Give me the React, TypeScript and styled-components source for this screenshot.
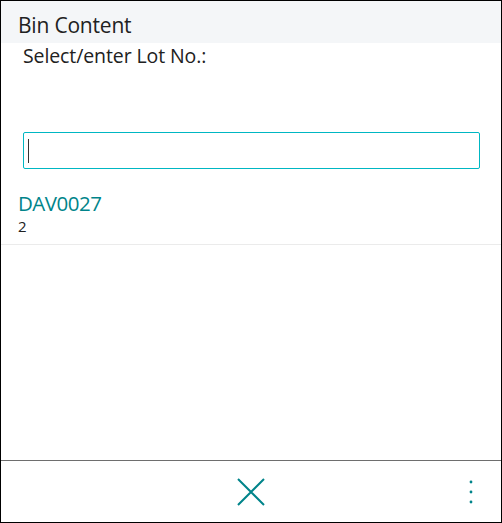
import React from "react";
import styled, { createGlobalStyle } from "styled-components";

const GlobalStyle = createGlobalStyle`
  html, body {
    margin: 0;
    padding: 0;
    background: #ffffff;
  }
  * {
    box-sizing: border-box;
  }
`;

const Dialog = styled.div`
  width: 502px;
  height: 523px;
  border: 1px solid #000000;
  display: flex;
  flex-direction: column;
  background: #ffffff;
  font-family: "Open Sans", "Noto Sans", sans-serif;
  color: #212121;
`;

const Header = styled.div`
  height: 42px;
  background: #f4f6f8;
  padding: 10px 0 0 17px;
  font-size: 21px;
  line-height: 28px;
  letter-spacing: -0.2px;
`;

const Prompt = styled.div`
  padding-left: 22px;
  font-size: 19.5px;
  line-height: 26px;
  letter-spacing: -0.1px;
`;

const InputWrap = styled.div`
  padding: 63px 21px 0 22px;
`;

const LotInput = styled.div`
  height: 37px;
  border: 1px solid #00b7c3;
  border-radius: 2px;
  display: flex;
  align-items: center;
  padding-left: 4px;
`;

const Caret = styled.span`
  width: 1px;
  height: 24px;
  background: #333333;
`;

const List = styled.div`
  flex: 1;
  padding-top: 20px;
`;

const Row = styled.div`
  padding: 0 0 9px 17px;
  border-bottom: 1px solid #ebebeb;
`;

const LotNo = styled.div`
  color: #00848a;
  font-size: 20.5px;
  line-height: 28px;
  letter-spacing: -0.5px;
`;

const Qty = styled.div`
  font-size: 15px;
  line-height: 18px;
`;

const Footer = styled.div`
  height: 62px;
  border-top: 1px solid #6e6e6e;
  display: grid;
  grid-template-columns: 1fr auto 1fr;
  align-items: center;
`;

const IconButton = styled.button<{ $align?: string }>`
  background: none;
  border: none;
  padding: 0;
  display: flex;
  justify-self: ${({ $align }) => $align || "center"};
  align-items: center;
  justify-content: center;
  cursor: pointer;
`;

const MoreButton = styled(IconButton)`
  margin-right: 28px;
`;

const CloseIcon = () => (
  <svg width="28" height="28" viewBox="0 0 28 28">
    <path d="M1 1 L27 27 M27 1 L1 27" stroke="#00848a" strokeWidth="2" fill="none" />
  </svg>
);

const MoreIcon = () => (
  <svg width="4" height="24" viewBox="0 0 4 24">
    <circle cx="2" cy="2" r="1.4" fill="#00848a" />
    <circle cx="2" cy="12" r="1.4" fill="#00848a" />
    <circle cx="2" cy="22" r="1.4" fill="#00848a" />
  </svg>
);

export default function App() {
  return (
    <>
      <GlobalStyle />
      <Dialog>
        <Header>Bin Content</Header>
        <Prompt>Select/enter Lot No.:</Prompt>
        <InputWrap>
          <LotInput>
            <Caret />
          </LotInput>
        </InputWrap>
        <List>
          <Row>
            <LotNo>DAV0027</LotNo>
            <Qty>2</Qty>
          </Row>
        </List>
        <Footer>
          <span />
          <IconButton aria-label="Close">
            <CloseIcon />
          </IconButton>
          <MoreButton $align="end" aria-label="More options">
            <MoreIcon />
          </MoreButton>
        </Footer>
      </Dialog>
    </>
  );
}
